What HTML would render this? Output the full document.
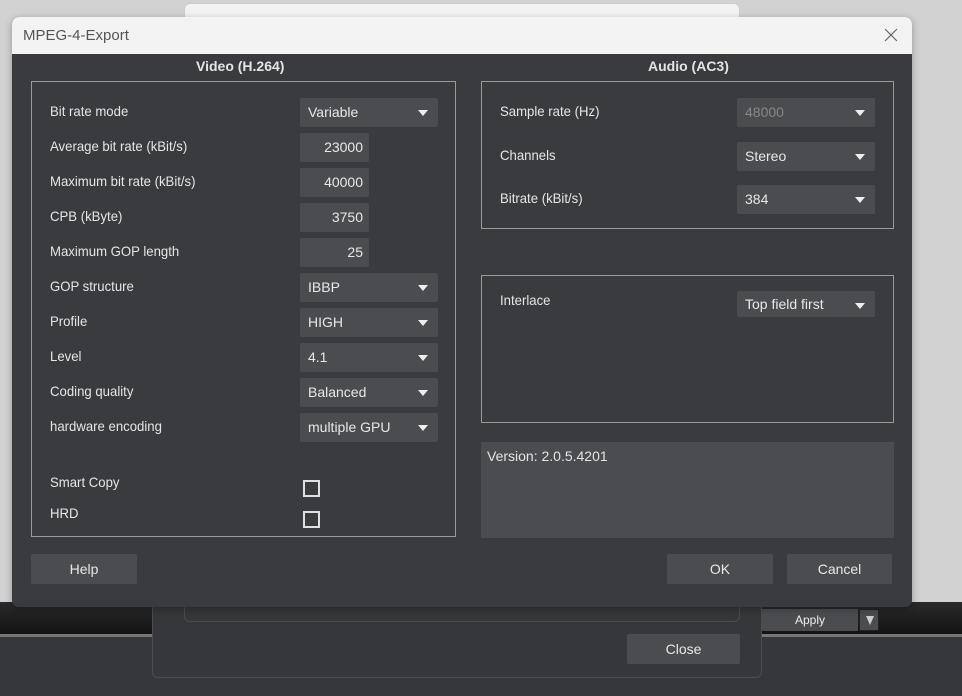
<!DOCTYPE html>
<html><head><meta charset="utf-8"><style>
*{box-sizing:border-box;margin:0;padding:0}
body{width:962px;height:696px;position:relative;overflow:hidden;background:#d2d2d2;font-family:"Liberation Sans",sans-serif;font-size:14px;color:#e4e4e4}
.a{position:absolute}
.lbl{position:absolute;font-size:14px;color:#e6e6e6;transform:scaleX(.94);transform-origin:left}
.dd{position:absolute;background:#4a4c50;border-radius:2px;height:29px;width:138px;padding-left:8px;line-height:29px;color:#e8e8e8}
.dd:after{content:"";position:absolute;right:10px;top:12px;border-left:5px solid transparent;border-right:5px solid transparent;border-top:6px solid #eee}
.in{position:absolute;background:#4a4c50;border-radius:2px;height:29px;width:69px;padding-right:6px;text-align:right;line-height:29px;color:#e8e8e8}
.btn{position:absolute;background:#4a4c50;border-radius:2px;height:30px;line-height:30px;text-align:center;color:#e8e8e8}
.cb{position:absolute;width:17px;height:17px;border:2px solid #e0e0e0}
.box{position:absolute;border:1px solid #9a9a9a}
</style></head><body>
<div class="a" style="left:0;top:602px;width:962px;height:34px;background:linear-gradient(#2a2b2d,#111)"></div>
<div class="a" style="left:0;top:634px;width:962px;height:3px;background:#777"></div>
<div class="a" style="left:0;top:637px;width:962px;height:59px;background:#35373b"></div>
<div class="a" style="left:152px;top:560px;width:610px;height:118px;background:#35373a;border:1px solid #4a4c50;border-radius:6px"></div>
<div class="a" style="left:184px;top:560px;width:556px;height:62px;border:1px solid #4a4c50;border-radius:6px;background:#35373a"></div>
<div class="btn" style="left:627px;top:634px;width:113px;line-height:30px">Close</div>
<div class="a" style="left:762px;top:609px;width:96px;height:22px;background:#4a4c50;color:#eee;font-size:12px;text-align:center;line-height:22px">Apply</div>
<div class="a" style="left:859px;top:609px;width:20px;height:22px;background:#4a4c50;border:1px solid #222"></div>
<div class="a" style="left:866px;top:616px;border-left:4px solid transparent;border-right:4px solid transparent;border-top:9px solid #ccc"></div>
<div class="a" style="left:184px;top:3px;width:556px;height:40px;background:#f3f3f3;border:1px solid #ccc;border-radius:6px"></div>
<div class="a" style="left:12px;top:17px;width:900px;height:590px;background:#393b3f;border-radius:7px;overflow:hidden;box-shadow:0 2px 8px rgba(0,0,0,.3)">
<div class="a" style="left:0;top:0;width:900px;height:37px;background:#f3f3f3"></div>
<div class="a" style="left:11px;top:10px;color:#555;font-size:15px">MPEG-4-Export</div>
<svg class="a" style="left:872px;top:11px" width="14" height="14"><path d="M1 1L13 13M13 1L1 13" stroke="#666" stroke-width="1.2"/></svg>
</div>
<div class="a" style="left:196px;top:58px;font-weight:bold;font-size:14px">Video (H.264)</div>
<div class="a" style="left:648px;top:58px;font-weight:bold;font-size:14px">Audio (AC3)</div>
<div class="box" style="left:31px;top:81px;width:425px;height:456px"></div>
<div class="box" style="left:481px;top:81px;width:413px;height:148px"></div>
<div class="box" style="left:481px;top:275px;width:413px;height:148px"></div>
<div class="a" style="left:481px;top:442px;width:413px;height:96px;background:#4a4c50"></div>
<div class="a" style="left:487px;top:448px">Version: 2.0.5.4201</div>
<div class="lbl" style="left:50px;top:103px">Bit rate mode</div>
<div class="lbl" style="left:50px;top:138px">Average bit rate (kBit/s)</div>
<div class="lbl" style="left:50px;top:173px">Maximum bit rate (kBit/s)</div>
<div class="lbl" style="left:50px;top:208px">CPB (kByte)</div>
<div class="lbl" style="left:50px;top:243px">Maximum GOP length</div>
<div class="lbl" style="left:50px;top:278px">GOP structure</div>
<div class="lbl" style="left:50px;top:313px">Profile</div>
<div class="lbl" style="left:50px;top:348px">Level</div>
<div class="lbl" style="left:50px;top:383px">Coding quality</div>
<div class="lbl" style="left:50px;top:418px">hardware encoding</div>
<div class="lbl" style="left:50px;top:474px">Smart Copy</div>
<div class="lbl" style="left:50px;top:505px">HRD</div>
<div class="dd" style="left:300px;top:98px">Variable</div>
<div class="in" style="left:300px;top:133px">23000</div>
<div class="in" style="left:300px;top:168px">40000</div>
<div class="in" style="left:300px;top:203px">3750</div>
<div class="in" style="left:300px;top:238px">25</div>
<div class="dd" style="left:300px;top:273px">IBBP</div>
<div class="dd" style="left:300px;top:308px">HIGH</div>
<div class="dd" style="left:300px;top:343px">4.1</div>
<div class="dd" style="left:300px;top:378px">Balanced</div>
<div class="dd" style="left:300px;top:413px">multiple GPU</div>
<div class="cb" style="left:303px;top:480px"></div>
<div class="cb" style="left:303px;top:511px"></div>
<div class="lbl" style="left:500px;top:103px">Sample rate (Hz)</div>
<div class="lbl" style="left:500px;top:147px">Channels</div>
<div class="lbl" style="left:500px;top:190px">Bitrate (kBit/s)</div>
<div class="lbl" style="left:500px;top:292px">Interlace</div>
<div class="dd" style="left:737px;top:98px;color:#888">48000</div>
<div class="dd" style="left:737px;top:142px">Stereo</div>
<div class="dd" style="left:737px;top:185px">384</div>
<div class="dd" style="left:737px;top:291px;height:26px;line-height:26px">Top field first</div>
<div class="btn" style="left:31px;top:554px;width:106px">Help</div>
<div class="btn" style="left:667px;top:554px;width:106px">OK</div>
<div class="btn" style="left:787px;top:554px;width:105px">Cancel</div>
</body></html>
